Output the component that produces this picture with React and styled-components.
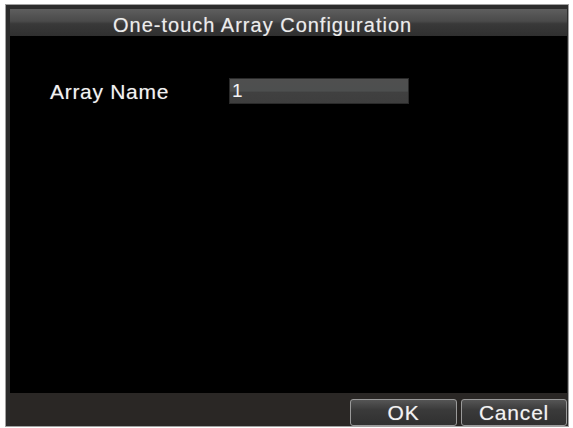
import styled, { createGlobalStyle } from 'styled-components';

const Global = createGlobalStyle`
    body {
        margin: 0;
        background: #ffffff;
        font-family: "Liberation Sans", Arial, sans-serif;
    }
`

const Window = styled.div`
    margin: 4px 0 0 5px;
    width: 564px;
    height: 423px;
    box-sizing: border-box;
    border: 1px solid #a2a2a2;
    background: #2c2c2c;
    padding: 4px 1px 0 4px;
    display: flex;
    flex-direction: column;
`

const TitleBar = styled.div`
    height: 27px;
    flex-shrink: 0;
    background: linear-gradient(#5e5e5e, #4a4a4a 45%, #393939 55%, #2f2f2f);
    color: #ececec;
    font-size: 20px;
    letter-spacing: 1px;
    line-height: 27px;
    padding-left: 103px;
    padding-top: 3px;
    box-sizing: border-box;
    white-space: nowrap;
    text-shadow: 0 0 1px rgba(255, 255, 255, 0.4);
`

const Body = styled.div`
    flex: 1;
    background: #000000;
    padding: 42px 0 0 40px;
`

const Field = styled.div`
    display: flex;
    align-items: center;
`

const Label = styled.span`
    width: 179px;
    color: #f2f2f2;
    font-size: 21px;
    letter-spacing: 0.7px;
    padding-top: 1px;
    text-shadow: 0 0 1px rgba(255, 255, 255, 0.4);
`

const Input = styled.div`
    width: 180px;
    height: 26px;
    box-sizing: border-box;
    background: linear-gradient(#4f4f4f, #4d4f4f 50%, #404040 55%, #3e3e3e);
    border: 1px solid #2a2a2a;
    color: #f4f4f4;
    font-size: 19px;
    line-height: 24px;
    padding-left: 2px;
`

const Footer = styled.div`
    height: 33px;
    flex-shrink: 0;
    background: #2a2725;
    display: flex;
    justify-content: flex-end;
    align-items: flex-start;
    gap: 4px;
    padding-top: 6px;
    box-sizing: border-box;
`

const Button = styled.div`
    width: ${props => props.w}px;
    height: 27px;
    box-sizing: border-box;
    border: 1px solid #9a9a9a;
    border-radius: 3px;
    background: linear-gradient(#555555, #3a3a3a 40%, #303030);
    color: #f2f2f2;
    font-size: 21px;
    line-height: 25px;
    text-align: center;
    letter-spacing: 0.8px;
    text-shadow: 0 0 1px rgba(255, 255, 255, 0.4);
`

export default function App () {
    return (
        <>
            <Global />
            <Window>
                <TitleBar>One-touch Array Configuration</TitleBar>
                <Body>
                    <Field>
                        <Label>Array Name</Label>
                        <Input>1</Input>
                    </Field>
                </Body>
                <Footer>
                    <Button w={107}>OK</Button>
                    <Button w={106}>Cancel</Button>
                </Footer>
            </Window>
        </>
    )
}
